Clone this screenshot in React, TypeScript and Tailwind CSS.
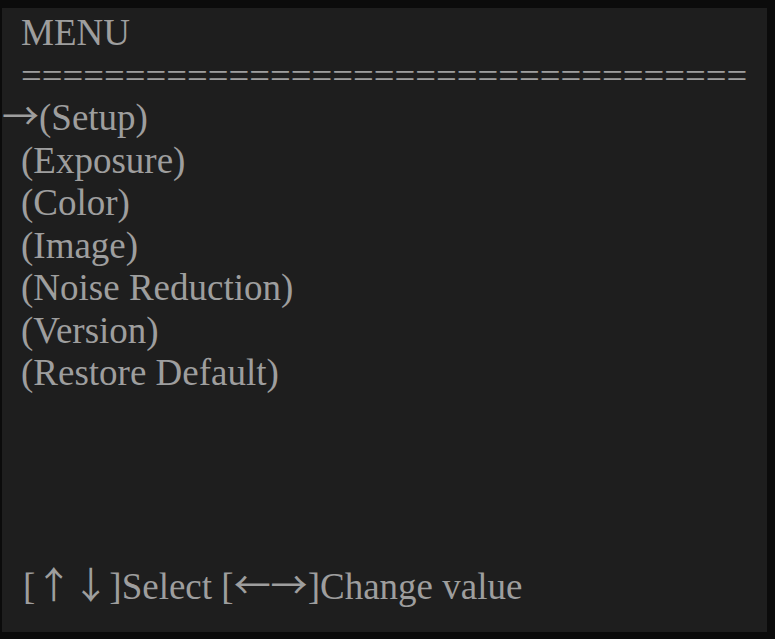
const items = ['(Setup)', '(Exposure)', '(Color)', '(Image)', '(Noise Reduction)', '(Version)', '(Restore Default)'];

function Arrow({ children }: { children: string }) {
  return <span className="font-['Noto_Sans_CJK_SC','DejaVu_Sans',sans-serif] leading-[0px]">{children}</span>;
}

export default function App() {
  return (
    <div className="w-[775px] h-[639px] bg-[#0b0b0b] pt-[8px] pl-[2px] pr-[8px] pb-[7px]">
      <div className="w-full h-full bg-[#1e1e1e] text-[#9e9e9e] text-[37px] leading-[42.5px] pl-[19px] pt-[4px] flex flex-col font-['Liberation_Serif','Times_New_Roman',serif]">
        <div>MENU</div>
        <div className="whitespace-nowrap text-[36.8px]">{'='.repeat(35)}</div>
        {items.map((label, i) => (
          <div key={label} className={i === 0 ? '-ml-[19px] whitespace-nowrap' : 'whitespace-nowrap'}>
            {i === 0 && <Arrow>→</Arrow>}
            {label}
          </div>
        ))}
        <div className="mt-auto mb-[24px] pl-[2px] whitespace-nowrap">
          [<Arrow>↑↓</Arrow>]Select [<Arrow>←→</Arrow>]Change value
        </div>
      </div>
    </div>
  );
}
